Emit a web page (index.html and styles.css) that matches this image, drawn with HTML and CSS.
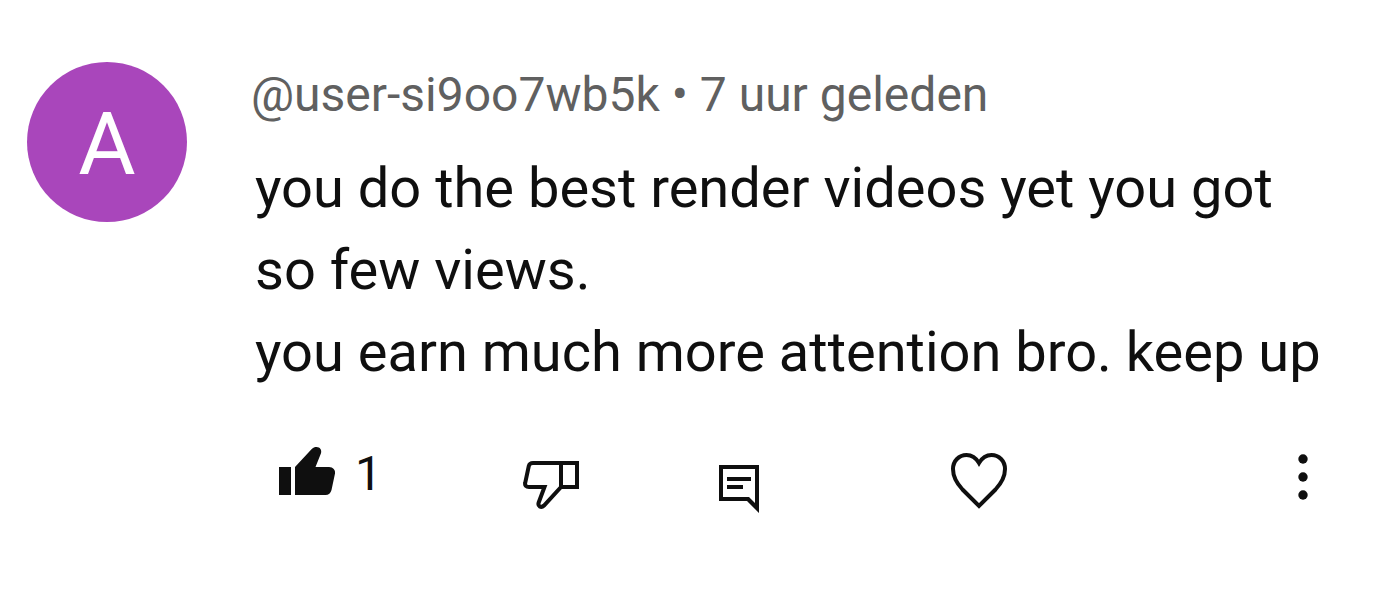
FILE: index.html
```html
<!DOCTYPE html>
<html lang="nl">
<head>
  <meta charset="UTF-8" />
  <meta name="viewport" content="width=device-width, initial-scale=1.0"/>
  <title>Reacties</title>
  <link rel="stylesheet" href="styles.css">
</head>
<body>

<article class="comment">
  <!-- Avatar -->
  <div class="avatar">A</div>

  <div class="comment-main">
    <header class="comment-meta">@user-si9oo7wb5k • 7 uur geleden</header>

    <p class="comment-text">you do the best render videos yet you got so few views.<br>you earn much more attention bro. keep up</p>

    <!-- Actions -->
    <div class="actions">
      <button type="button" class="action" aria-label="Like">
        <svg class="icon" viewBox="0 0 64 72">
          <g transform="translate(4 4)">
            <path d="M0 20H12V48H0Z"/>
            <path d="M16 20L32.5 2.2C34 .6 35.8 0 37.500 0C41 0 43 3 42 6.2L36.500 20H50C54 20 56.7 23 56 26.5L52.5 43C51.8 46 49.5 48 46.5 48H16Z"/>
          </g>
        </svg>
        <span class="count">1</span>
      </button>

      <button type="button" class="action" aria-label="Dislike">
        <svg class="icon line" viewBox="0 0 64 72">
          <path transform="translate(4 18)" d="M38 2V26L21 44.5C18 47.5 14.5 45 15.7 41.5L21.5 26H6C3.2 26 1.6 24.3 2.2 21.8L5.8 5C6.3 3 7.8 2 10 2H54V26H38"/>
        </svg>
      </button>

      <button type="button" class="action" aria-label="Reply">
        <svg class="icon" viewBox="0 0 64 72">
          <g transform="translate(12 22)">
            <path fill-rule="evenodd" d="M0 0H40V48L28 36H0ZM4 4V32H30L36 38V4Z"/>
            <path d="M8 12H32V16H8ZM8 20H24V24H8Z"/>
          </g>
        </svg>
      </button>

      <button type="button" class="action" aria-label="Heart">
        <svg class="icon line" viewBox="0 0 64 72">
          <path transform="translate(4 10)" d="M28 10C25 5 20.5 2 15.5 2C8 2 2 8 2 16C2 23 5 29.5 11.5 36.5L28 53L44.5 36.5C51 29.5 54 23 54 16C54 8 48 2 40.5 2C35.5 2 31 5 28 10Z"/>
        </svg>
      </button>

      <button type="button" class="action" aria-label="More">
        <svg class="icon" viewBox="0 0 64 72">
          <circle cx="32" cy="16" r="4.7"/>
          <circle cx="32" cy="34" r="4.7"/>
          <circle cx="32" cy="52" r="4.7"/>
        </svg>
      </button>
    </div>
  </div>
</article>

</body>
</html>
```
FILE: styles.css
```css
body {
  margin: 0;
  font-family: Roboto, sans-serif;
  background: #fff;
  color: #0f0f0f;
}

.comment {
  display: flex;
  gap: 64px;
  padding: 62px 59px 62px 27px;
}

.avatar {
  flex: none;
  display: flex;
  align-items: center;
  justify-content: center;
  box-sizing: border-box;
  width: 160px;
  height: 160px;
  padding-top: 4px;
  border-radius: 50%;
  background: #a946bb;
  color: #fff;
  font-size: 88px;
  line-height: 1;
}

.comment-main {
  flex: 1;
  min-width: 0;
}

.comment-meta {
  padding-top: 5px;
  color: #606060;
  font-size: 48px;
  line-height: 56px;
}

.comment-text {
  margin: 24px 0 50px;
  padding-left: 4px;
  font-size: 56px;
  line-height: 82px;
}

.actions {
  display: grid;
  grid-template-columns: 244fr 188fr 240fr 324fr 64px;
  padding-left: 24px;
}

.action {
  display: flex;
  align-items: center;
  justify-self: start;
  gap: 16px;
  padding: 0;
  border: 0;
  background: none;
  color: inherit;
  font: inherit;
  cursor: pointer;
}

.icon {
  display: block;
  width: 64px;
  height: 72px;
  fill: currentColor;
}

.icon.line {
  fill: none;
  stroke: currentColor;
  stroke-width: 4px;
}

.count {
  font-size: 48px;
  line-height: 60px;
  padding-bottom: 10px;
}
```
